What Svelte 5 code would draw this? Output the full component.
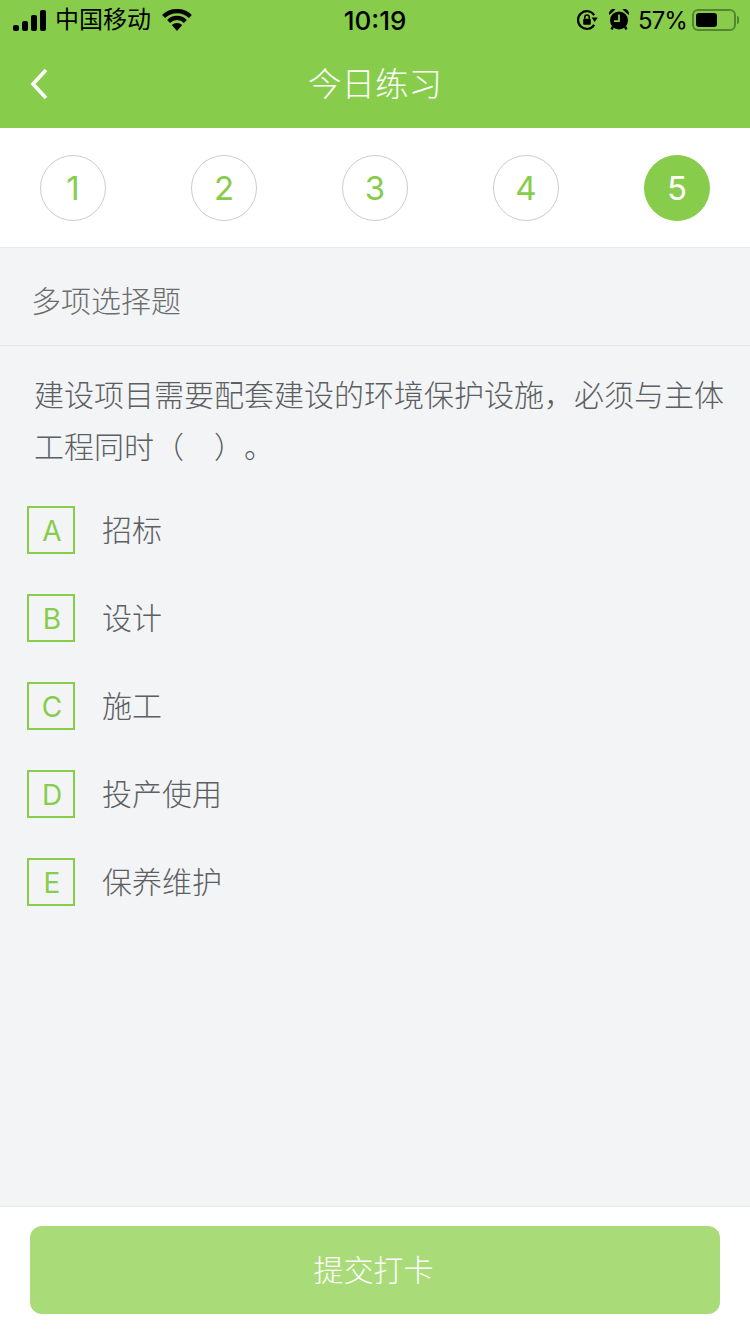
<script>
  const steps = [1, 2, 3, 4, 5];
  const current = 5;
  const options = [
    { key: 'A', text: '招标' },
    { key: 'B', text: '设计' },
    { key: 'C', text: '施工' },
    { key: 'D', text: '投产使用' },
    { key: 'E', text: '保养维护' }
  ];
</script>

<div class="page">
  <header class="top">
    <div class="status">
      <div class="status-side">
        <svg class="signal" width="33" height="21" viewBox="0 0 33 21">
          <rect x="0" y="15" width="6" height="6" rx="2" />
          <rect x="9" y="11" width="6" height="10" rx="2" />
          <rect x="18" y="5" width="6" height="16" rx="2" />
          <rect x="27" y="0" width="6" height="21" rx="2" />
        </svg>
        <span class="carrier">中国移动</span>
        <svg class="wifi" width="30" height="22" viewBox="0 0 30 22">
          <path d="M15 22 L9.8 16 A7.6 7.6 0 0 1 20.2 16 Z" />
          <path d="M6.6 12.4 A12 12 0 0 1 23.4 12.4" class="arc" />
          <path d="M1.6 7.4 A19.4 19.4 0 0 1 28.4 7.4" class="arc" />
        </svg>
      </div>
      <span class="time">10:19</span>
      <div class="status-side right">
        <svg class="lock" width="22" height="22" viewBox="0 0 22 22">
          <path d="M18.2 6.2 A8.8 8.8 0 1 0 18.2 15.8" class="ring" />
          <path d="M15.6 8.6 L21.8 8.6 L18.7 13 Z" />
          <rect x="7.2" y="9.8" width="7.6" height="6" rx="1" />
          <path d="M8.8 9.8 V8.2 A2.2 2.2 0 0 1 13.2 8.2 V9.8" class="shackle" />
        </svg>
        <svg class="alarm" width="20" height="22" viewBox="0 0 20 22">
          <circle cx="10" cy="11.4" r="9" />
          <path d="M0.4 6 A4.4 4.4 0 0 1 6.4 0.4 Z M19.6 6 A4.4 4.4 0 0 0 13.6 0.4 Z" />
          <path d="M4 17.4 L2.6 20.4 M16 17.4 L17.4 20.4" class="legs" />
          <path d="M10 5.6 V12.2 H5" class="hands" />
        </svg>
        <span class="pct">57%</span>
        <div class="battery"><div class="charge" style="width: {57}%"></div></div>
        <div class="nub"></div>
      </div>
    </div>
    <div class="nav">
      <svg class="back" width="18" height="32" viewBox="0 0 18 32">
        <path d="M16 2 L3 16 L16 30" />
      </svg>
      <h1>今日练习</h1>
    </div>
  </header>

  <nav class="steps">
    {#each steps as n}
      <div class="step" class:active={n === current}>{n}</div>
    {/each}
  </nav>

  <div class="type">多项选择题</div>

  <main class="body">
    <p class="question">建设项目需要配套建设的环境保护设施，必须与主体工程同时（<span class="blank"></span>）。</p>
    <ul class="options">
      {#each options as opt}
        <li>
          <span class="key">{opt.key}</span>
          <span class="label">{opt.text}</span>
        </li>
      {/each}
    </ul>
  </main>

  <footer class="bottom">
    <button class="submit">提交打卡</button>
  </footer>
</div>

<style>
  :global(body) {
    margin: 0;
    background: #f2f4f6;
  }

  .page {
    width: 750px;
    height: 1334px;
    display: flex;
    flex-direction: column;
    background: #f2f4f6;
    font-family: Inter, "Noto Sans CJK SC", sans-serif;
    font-weight: 300;
    text-spacing-trim: space-all;
    overflow: hidden;
  }

  .top {
    height: 128px;
    flex: none;
    background: #87cd4b;
    display: flex;
    flex-direction: column;
  }

  .status {
    height: 40px;
    display: grid;
    grid-template-columns: 1fr auto 1fr;
    align-items: center;
    color: #000;
  }

  .status-side {
    display: flex;
    align-items: center;
    padding-left: 13px;
  }

  .status-side.right {
    justify-content: flex-end;
    padding: 0 11px 0 0;
  }

  .signal {
    margin-right: 9px;
    fill: #000;
  }

  .carrier {
    font-family: "Noto Sans CJK SC", sans-serif;
    font-size: 24px;
    font-weight: 400;
    width: 96px;
    line-height: 30px;
    padding-bottom: 4px;
    white-space: nowrap;
  }

  .wifi {
    margin-left: 11px;
    fill: #000;
  }

  .wifi .arc {
    fill: none;
    stroke: #000;
    stroke-width: 4.2;
  }

  .time {
    font-size: 26px;
    font-weight: 500;
  }

  .lock {
    fill: #000;
    margin-right: 11px;
  }

  .lock .ring {
    fill: none;
    stroke: #000;
    stroke-width: 2.2;
  }

  .lock .shackle {
    fill: none;
    stroke: #000;
    stroke-width: 1.6;
  }

  .alarm {
    fill: #000;
    margin-right: 9px;
  }

  .alarm .legs {
    stroke: #000;
    stroke-width: 2.4;
    fill: none;
  }

  .alarm .hands {
    stroke: #87cd4b;
    stroke-width: 1.8;
    fill: none;
  }

  .pct {
    font-size: 24px;
    font-weight: 400;
    letter-spacing: -0.9px;
    margin-right: 5px;
  }

  .battery {
    width: 44px;
    height: 22px;
    box-sizing: border-box;
    border: 2px solid #55852f;
    border-radius: 6px;
    padding: 2px;
  }

  .charge {
    height: 100%;
    background: #000;
    border-radius: 3px;
  }

  .nub {
    width: 2px;
    height: 8px;
    margin-left: 1px;
    background: #55852f;
    border-radius: 0 2px 2px 0;
  }

  .nav {
    height: 88px;
    display: flex;
    align-items: center;
    justify-content: center;
    position: relative;
  }

  .back {
    position: absolute;
    left: 30px;
    top: 28px;
    fill: none;
    stroke: #fff;
    stroke-width: 3.6;
  }

  h1 {
    margin: 0;
    font-size: 33.5px;
    font-weight: 300;
    color: #fff;
    padding-bottom: 5px;
  }

  .steps {
    height: 119px;
    flex: none;
    background: #fff;
    border-bottom: 1px solid #e6e8ea;
    display: flex;
    align-items: center;
    justify-content: space-between;
    padding: 0 40px;
  }

  .step {
    width: 66px;
    height: 66px;
    box-sizing: border-box;
    border-radius: 50%;
    border: 1px solid #ccc;
    background: #fff;
    color: #87cd4b;
    font-size: 33px;
    font-weight: 400;
    display: flex;
    align-items: center;
    justify-content: center;
  }

  .step.active {
    background: #87cd4b;
    border-color: #87cd4b;
    color: #fff;
  }

  .type {
    height: 98px;
    flex: none;
    box-sizing: border-box;
    border-bottom: 1px solid #e6e8ea;
    padding: 4px 0 0 31px;
    display: flex;
    align-items: center;
    font-size: 30px;
    color: #6b6d6f;
  }

  .body {
    flex: 1;
    padding: 23px 0 0 27px;
  }

  .question {
    margin: 0;
    padding: 0 20px 0 7px;
    font-size: 30px;
    line-height: 52px;
    color: #5c5e61;
  }

  .blank {
    display: inline-block;
    width: 30px;
  }

  .options {
    list-style: none;
    margin: 33px 0 0;
    padding: 0;
    display: flex;
    flex-direction: column;
    gap: 40px;
  }

  .options li {
    display: flex;
    align-items: center;
    height: 48px;
  }

  .key {
    width: 48px;
    height: 48px;
    box-sizing: border-box;
    border: 2px solid #87cd4b;
    color: #87cd4b;
    font-size: 28px;
    font-weight: 400;
    display: flex;
    align-items: center;
    justify-content: center;
    padding: 2px 0 0 2px;
  }

  .label {
    margin-left: 27px;
    font-size: 30px;
    color: #5c5e61;
    padding-bottom: 4px;
  }

  .bottom {
    height: 128px;
    flex: none;
    box-sizing: border-box;
    background: #fff;
    border-top: 1px solid #e6e8ea;
    padding: 19px 30px 0;
  }

  .submit {
    display: block;
    width: 100%;
    height: 88px;
    border: 0;
    border-radius: 12px;
    background: #a9dc78;
    color: #fff;
    font-family: inherit;
    font-weight: 300;
    font-size: 30px;
    padding: 0 3px 4px 0;
  }
</style>
